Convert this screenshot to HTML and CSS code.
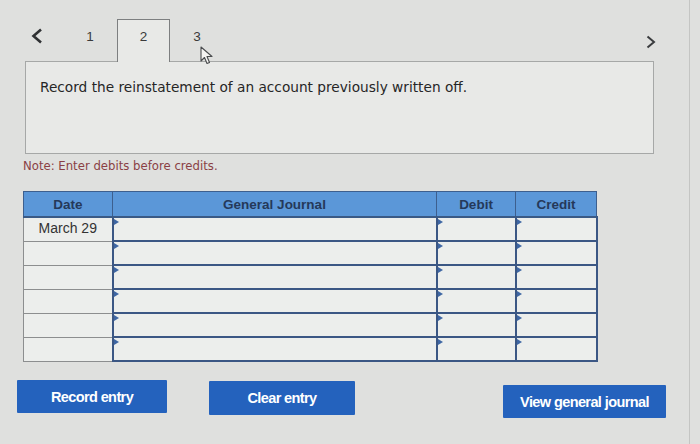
FILE: index.html
```html
<!DOCTYPE html>
<html>
<head>
<meta charset="utf-8">
<link rel="stylesheet" href="styles.css">
</head>
<body>
<div class="screen">
  <div class="wrap">
    <div class="tabs">
      <div class="prev">
        <svg width="14" height="16" viewBox="0 0 14 16"><path d="M11 1.5 L3.5 8 L11 14.5" fill="none" stroke="#2f3133" stroke-width="2.6" stroke-linejoin="miter"/></svg>
      </div>
      <div class="tab">1</div>
      <div class="tab active">2</div>
      <div class="tab">3</div>
      <div class="next">
        <svg width="12" height="14" viewBox="0 0 12 14"><path d="M2.5 1.5 L9 7 L2.5 12.5" fill="none" stroke="#3a3c3e" stroke-width="2"/></svg>
      </div>
      <svg class="cursor" width="16" height="20" viewBox="0 0 16 20"><path d="M1 1 L1 15 L4.5 11.5 L7 17.5 L9.5 16.5 L7 10.5 L12 10.5 Z" fill="#f4f4f2" stroke="#4a4c4e" stroke-width="1.1" stroke-linejoin="round"/></svg>
    </div>
    <div class="panel">
      <p class="question">Record the reinstatement of an account previously written off.</p>
    </div>
  </div>

  <p class="note">Note: Enter debits before credits.</p>

  <table class="journal">
    <thead>
      <tr>
        <th class="c-date">Date</th>
        <th class="c-gj">General Journal</th>
        <th class="c-dr">Debit</th>
        <th class="c-cr">Credit</th>
      </tr>
    </thead>
    <tbody>
      <tr><td class="date first">March 29</td><td class="in"><span class="mk"></span></td><td class="in"><span class="mk"></span></td><td class="in"><span class="mk"></span></td></tr>
      <tr><td class="date"></td><td class="in"><span class="mk"></span></td><td class="in"><span class="mk"></span></td><td class="in"><span class="mk"></span></td></tr>
      <tr><td class="date"></td><td class="in"><span class="mk"></span></td><td class="in"><span class="mk"></span></td><td class="in"><span class="mk"></span></td></tr>
      <tr><td class="date"></td><td class="in"><span class="mk"></span></td><td class="in"><span class="mk"></span></td><td class="in"><span class="mk"></span></td></tr>
      <tr><td class="date"></td><td class="in"><span class="mk"></span></td><td class="in"><span class="mk"></span></td><td class="in"><span class="mk"></span></td></tr>
      <tr><td class="date"></td><td class="in"><span class="mk"></span></td><td class="in"><span class="mk"></span></td><td class="in"><span class="mk"></span></td></tr>
    </tbody>
  </table>

  <div class="actions">
    <button class="btn b-record">Record entry</button>
    <button class="btn b-clear">Clear entry</button>
    <button class="btn b-view">View general journal</button>
  </div>
</div>
</body>
</html>
```
FILE: styles.css
```css
html, body {
  margin: 0;
  padding: 0;
  background: #dfe0de;
  font-family: "DejaVu Sans", Verdana, sans-serif;
}
.screen {
  width: 690px;
  height: 444px;
  border-right: 1px solid #c4c5c3;
  box-sizing: border-box;
  overflow: hidden;
}
.wrap {
  padding: 19px 0 0 25px;
}
.tabs {
  position: relative;
  display: flex;
  align-items: flex-end;
  width: 640px;
  height: 42px;
}
.prev {
  width: 38px;
  height: 42px;
  display: flex;
  align-items: flex-start;
  padding: 9px 0 0 5px;
  box-sizing: border-box;
}
.tab {
  width: 54px;
  height: 42px;
  box-sizing: border-box;
  padding-top: 10px;
  text-align: center;
  font-family: "Liberation Sans", Arial, sans-serif;
  font-size: 13.5px;
  color: #3a3a3a;
}
.tab.active {
  width: 53px;
  height: 43px;
  margin-bottom: -1px;
  border: 1px solid #7d7f80;
  border-bottom: none;
  background: #e8e9e7;
  position: relative;
  z-index: 2;
  padding-top: 9px;
}
.next {
  margin-left: auto;
  width: 20px;
  height: 42px;
  padding-top: 15px;
  box-sizing: border-box;
}
.cursor {
  position: absolute;
  left: 175px;
  top: 27px;
}
.panel {
  width: 629px;
  height: 93px;
  box-sizing: border-box;
  border: 1px solid #a6a8a7;
  background: #e8e9e7;
  padding: 17px 0 0 14px;
}
.question {
  margin: 0;
  font-size: 13.7px;
  color: #262626;
}
.note {
  margin: 5px 0 0 23px;
  font-size: 11.7px;
  color: #8a3f45;
  height: 16px;
}
.journal {
  margin: 16px 0 0 23px;
  border-collapse: collapse;
  font-family: "Liberation Sans", Arial, sans-serif;
  table-layout: fixed;
  width: 569px;
}
.journal th {
  background: #5b97d8;
  color: #25395a;
  font-size: 13.5px;
  font-weight: bold;
  height: 24px;
  padding: 0;
  border: 1px solid #3d5f8e;
  border-bottom: 2px solid #3a5a86;
}
.c-date { width: 88px; }
.c-gj { width: 323px; }
.c-dr { width: 78px; }
.c-cr { width: 80px; }
.journal td {
  height: 22px;
  padding: 0;
  background: #eceeec;
}
.journal td.date {
  border: 1px solid #8c8e8f;
  text-align: center;
  font-size: 14px;
  color: #333;
}
.journal td.first {
  height: 19px;
  padding-bottom: 3px;
}
.journal td.in {
  border-top: 2.5px solid #3b5784;
  border-bottom: 2.5px solid #3b5784;
  border-left: 2px solid #3b5784;
  border-right: 2px solid #3b5784;
  position: relative;
  vertical-align: top;
}
.mk {
  display: block;
  width: 0;
  height: 0;
  border-top: 3px solid transparent;
  border-bottom: 3px solid transparent;
  border-left: 5px solid #3e66a3;
  margin-top: 1px;
}
.actions {
  display: flex;
  align-items: flex-start;
  padding-left: 17px;
  margin-top: 18px;
}
.btn {
  border: none;
  background: #2462bd;
  color: #fff;
  font-family: "Liberation Sans", Arial, sans-serif;
  font-weight: bold;
  font-size: 14.5px;
  letter-spacing: -0.6px;
  border-radius: 1px;
  padding: 0;
}
.b-record {
  width: 150px;
  height: 33px;
}
.b-clear {
  width: 146px;
  height: 34px;
  margin-left: 42px;
  margin-top: 1px;
}
.b-view {
  width: 163px;
  height: 33px;
  margin-left: 148px;
  margin-top: 5px;
}
```
